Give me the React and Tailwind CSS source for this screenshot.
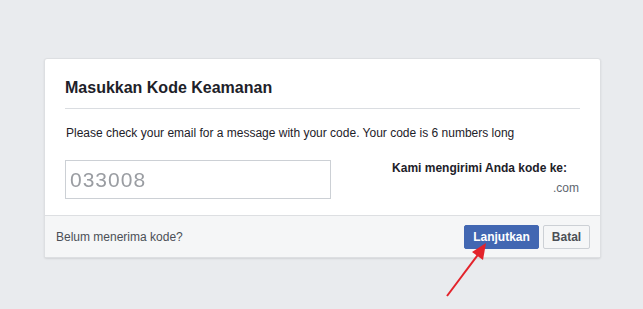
export default function App() {
    return (
        <div className="relative w-[643px] h-[309px] bg-[#e9ebee] pt-[58px] pl-[44px] overflow-hidden" style={{ fontFamily: '"Liberation Sans", Arial, sans-serif' }}>
            <div className="w-[557px] bg-white border border-[#dddfe2] rounded-[3px] shadow-[0_1px_2px_rgba(0,0,0,0.1)]">
                <div className="px-5 pt-[19px]">
                    <h2 className="text-[16px] leading-[20px] font-bold text-[#1d2129] pb-[10px] border-b border-[#dadde1]">Masukkan Kode Keamanan</h2>
                </div>
                <div className="px-5 pt-[16px] pb-[16px]">
                    <p className="text-[12px] leading-[16px] text-[#1d2129] pl-px">Please check your email for a message with your code. Your code is 6 numbers long</p>
                    <div className="flex items-start justify-between mt-[19px]">
                        <div className="w-[266px] h-[39px] border border-[#ccd0d5] flex items-center pl-[4px]">
                            <span className="text-[21px] text-[#9a9da2] tracking-[1px] blur-[0.6px]">033008</span>
                        </div>
                        <div className="flex flex-col items-end pr-[1px]">
                            <span className="text-[12px] leading-[16px] font-bold text-[#1d2129] mr-[12px]">Kami mengirimi Anda kode ke:</span>
                            <span className="text-[12px] leading-[16px] text-[#606770] mt-[4px]">.com</span>
                        </div>
                    </div>
                </div>
                <div className="bg-[#f5f6f7] border-t border-[#dddfe2] flex items-center justify-between pl-[11px] pr-[10px] h-[42px]">
                    <span className="text-[12px] text-[#4b4f56]">Belum menerima kode?</span>
                    <div className="flex gap-[4px]">
                        <button className="h-[24px] w-[75px] bg-[#4267b2] border border-[#4267b2] rounded-[2px] text-white text-[12px] font-bold">Lanjutkan</button>
                        <button className="h-[24px] w-[47px] bg-[#f5f6f7] border border-[#ccd0d5] rounded-[2px] text-[#4b4f56] text-[12px] font-bold">Batal</button>
                    </div>
                </div>
            </div>
            <svg className="absolute left-0 top-0" width="643" height="309" viewBox="0 0 643 309">
                <line x1="447" y1="296" x2="480" y2="252" stroke="#e3232b" strokeWidth="2" />
                <polygon points="486,243 472,252 483,260" fill="#e3232b" />
            </svg>
        </div>
    );
}
